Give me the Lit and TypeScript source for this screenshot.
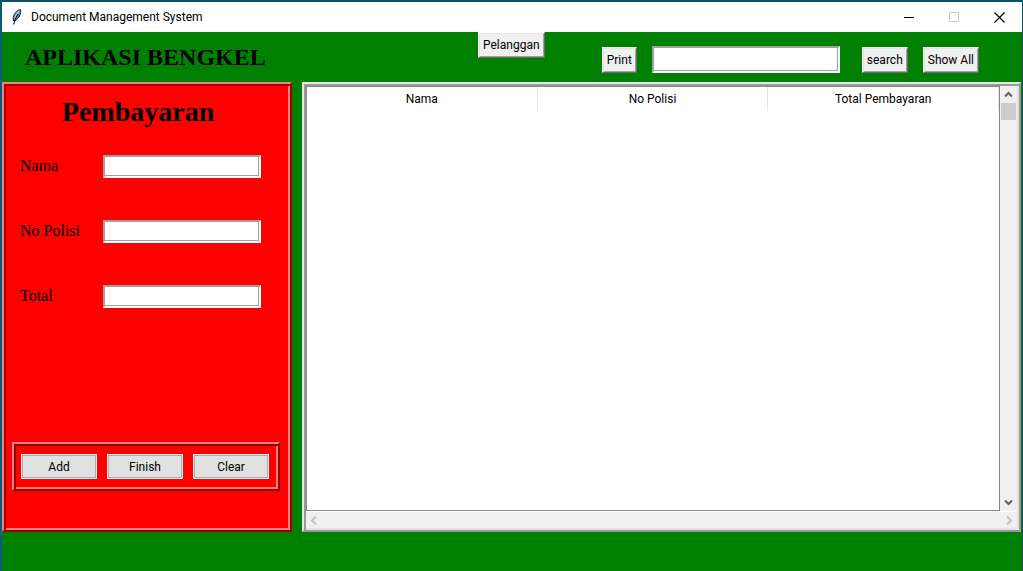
import { LitElement, html, css, svg } from "lit";
import { customElement } from "lit/decorators.js";

const chevron = (d: string) => html`
  <svg width="9" height="9" viewBox="0 0 9 9" aria-hidden="true">
    <path d=${d} fill="none" stroke="currentColor" stroke-width="2" />
  </svg>
`;

const UP = "M1 6.5 L4.5 3 L8 6.5";
const DOWN = "M1 2.5 L4.5 6 L8 2.5";
const LEFT = "M6 0.5 L2 4.5 L6 8.5";
const RIGHT = "M3 0.5 L7 4.5 L3 8.5";

const feather = svg`
  <path d="M10.5 0.5 C7 1 4 4.5 3.3 8.5 L3.2 11.5 L5 12 C8.5 9.5 11.5 5 10.5 0.5 Z" fill="#5a8fd0" stroke="#14202f" stroke-width="1"/>
  <path d="M9.3 2 C7 4 5.2 7 4.6 10" fill="none" stroke="#b9d6f5" stroke-width="1.3"/>
  <path d="M8 5 C6 8 4.3 11.5 3.6 15.5" fill="none" stroke="#101418" stroke-width="1.1"/>
`;

@customElement("app-root")
export class AppRoot extends LitElement {
  static styles = css`
    :host {
      display: block;
      font: 12px/16px Roboto, "Open Sans", sans-serif;
      color: #000;
    }
    * {
      box-sizing: border-box;
    }
    .window {
      display: flex;
      flex-direction: column;
      min-height: 100vh;
      background: #008000;
      border-style: solid;
      border-width: 2px 1px 0 2px;
      border-color: #07536a #17505a #17505a #035c78;
    }
    .titlebar {
      display: flex;
      align-items: center;
      height: 30px;
      padding-left: 8px;
      background: #fff;
    }
    .titlebar .name {
      flex: 1;
      padding-left: 6px;
    }
    .caption {
      display: grid;
      place-items: center;
      width: 45px;
      height: 30px;
      padding: 0;
      border: 0;
      background: none;
      color: #000;
    }
    .caption:disabled {
      color: #ccc;
    }
    .header {
      display: grid;
      grid-template-columns: 476fr 544fr;
      height: 50px;
    }
    h1,
    h2 {
      margin: 0;
      font-family: "Liberation Serif", serif;
      font-weight: bold;
    }
    h1 {
      padding-left: 23px;
      font-size: 24px;
      line-height: 50px;
    }
    h2 {
      padding-right: 16px;
      font-size: 28px;
      line-height: 48px;
      text-align: center;
    }
    .actions {
      display: flex;
      justify-content: space-between;
      align-items: flex-start;
      padding-right: 43px;
    }
    .tools {
      display: flex;
      align-items: center;
      gap: 15px;
      padding-top: 14px;
    }
    .raised {
      height: 26px;
      padding: 0 3px;
      border: 2px solid;
      border-color: #fff #696969 #696969 #fff;
      background: #f0f0f0;
      box-shadow: inset 1px 1px #e3e3e3, inset -1px -1px #a0a0a0;
      font: inherit;
      color: inherit;
      white-space: nowrap;
      border-width: 1px;
      padding: 0 4px;
    }
    .entry {
      min-width: 0;
      padding: 0 4px;
      border: 2px solid;
      border-color: #a0a0a0 #fff #fff #a0a0a0;
      border-radius: 0;
      background: #fff;
      box-shadow: inset -1px -1px #a0a0a0;
      font: inherit;
      outline: none;
    }
    .search {
      width: 188px;
      height: 27px;
      margin-right: 7px;
    }
    .main {
      display: grid;
      grid-template-columns: 290px 1fr;
      gap: 10px;
      height: calc(100vh - 121px);
      min-height: 400px;
      padding-right: 1px;
    }
    .ridge {
      border: 2px solid;
      border-color: #ff7f7f #990000 #990000 #ff7f7f;
      box-shadow: inset 2px 2px #990000, inset -2px -2px #ff7f7f;
    }
    .form {
      display: flex;
      flex-direction: column;
      padding: 4px 10px 39px 8px;
      background: #f00;
    }
    .field {
      display: grid;
      grid-template-columns: 83px 158px;
      align-items: center;
      height: 24px;
      margin-bottom: 41px;
      padding-left: 8px;
      font: 16px/24px "Liberation Serif", serif;
    }
    .fields {
      padding-top: 18px;
      flex: 1;
    }
    .field .entry {
      height: 23px;
    }
    .buttons {
      display: flex;
      gap: 10px;
      height: 49px;
      padding: 10px 9px 10px 7px;
    }
    .themed {
      flex: 1;
      padding: 0;
      border: 1px solid #f0f0f0;
      background: #e1e1e1;
      box-shadow: inset 0 0 0 1px #adadad;
      font: inherit;
      color: inherit;
    }
    .listing {
      display: grid;
      grid-template-columns: 1fr 17px;
      grid-template-rows: 1fr 17px;
      padding: 2px;
      min-width: 0;
      background: #f0f0f0;
      border: 2px solid;
      border-color: #e8e8e8 #999 #999 #e8e8e8;
      box-shadow: inset 2px 2px #999, inset -2px -2px #e3e3e3;
    }
    .tree {
      background: #fff;
      border: 1px solid #828790;
    }
    table {
      width: 100%;
      table-layout: fixed;
      border-collapse: separate;
      border-spacing: 0;
    }
    th {
      height: 24px;
      padding: 0;
      border-right: 1px solid #e5e5e5;
      font-weight: normal;
    }
    .vbar,
    .hbar {
      display: flex;
      align-items: center;
    }
    .vbar {
      flex-direction: column;
      color: #606060;
    }
    .hbar {
      grid-column: 1 / -1;
      justify-content: space-between;
      border-top: 1px solid #fff;
      color: #bfbfbf;
    }
    .arrow {
      display: grid;
      place-items: center;
      width: 17px;
      height: 17px;
      padding: 0;
      border: 0;
      background: none;
      color: inherit;
    }
    .hbar .arrow {
      height: 16px;
    }
    .track {
      flex: 1;
    }
    .thumb {
      width: 15px;
      height: 17px;
      background: #cdcdcd;
    }
  `;

  render() {
    return html`
      <div class="window">
        <div class="titlebar">
          <svg width="15" height="17" viewBox="0 0 15 17" aria-hidden="true">${feather}</svg>
          <span class="name">Document Management System</span>
          <button class="caption" aria-label="Minimize">
            <svg width="11" height="11" viewBox="0 0 11 11"><path d="M0 5.5H10" stroke="currentColor" /></svg>
          </button>
          <button class="caption" aria-label="Maximize" disabled>
            <svg width="11" height="11" viewBox="0 0 11 11">
              <path d="M0.5 0.5H9.5V9.5H0.5Z" fill="none" stroke="currentColor" />
            </svg>
          </button>
          <button class="caption" aria-label="Close">
            <svg width="11" height="11" viewBox="0 0 11 11">
              <path d="M0.5 0.5L10.5 10.5M10.5 0.5L0.5 10.5" stroke="currentColor" stroke-width="1.2" />
            </svg>
          </button>
        </div>
        <header class="header">
          <h1>APLIKASI BENGKEL</h1>
          <div class="actions">
            <button class="raised">Pelanggan</button>
            <div class="tools">
              <button class="raised">Print</button>
              <input class="entry search" type="text" aria-label="search" />
              <button class="raised">search</button>
              <button class="raised">Show All</button>
            </div>
          </div>
        </header>
        <main class="main">
          <form class="form ridge" @submit=${(e: Event) => e.preventDefault()}>
            <h2>Pembayaran</h2>
            <div class="fields">
              ${["Nama", "No Polisi", "Total"].map(
                (label, i) => html`
                  <div class="field">
                    <label for="field-${i}">${label}</label>
                    <input class="entry" id="field-${i}" type="text" />
                  </div>
                `
              )}
            </div>
            <div class="buttons ridge">
              ${["Add", "Finish", "Clear"].map(
                (label) => html`<button class="themed" type="button">${label}</button>`
              )}
            </div>
          </form>
          <section class="listing">
            <div class="tree">
              <table>
                <thead>
                  <tr>
                    ${["Nama", "No Polisi", "Total Pembayaran"].map(
                      (name) => html`<th scope="col">${name}</th>`
                    )}
                  </tr>
                </thead>
                <tbody></tbody>
              </table>
            </div>
            <div class="vbar">
              <button class="arrow" aria-label="Scroll up">${chevron(UP)}</button>
              <div class="thumb"></div>
              <div class="track"></div>
              <button class="arrow" aria-label="Scroll down">${chevron(DOWN)}</button>
            </div>
            <div class="hbar">
              <button class="arrow" aria-label="Scroll left">${chevron(LEFT)}</button>
              <button class="arrow" aria-label="Scroll right">${chevron(RIGHT)}</button>
            </div>
          </section>
        </main>
      </div>
    `;
  }
}
